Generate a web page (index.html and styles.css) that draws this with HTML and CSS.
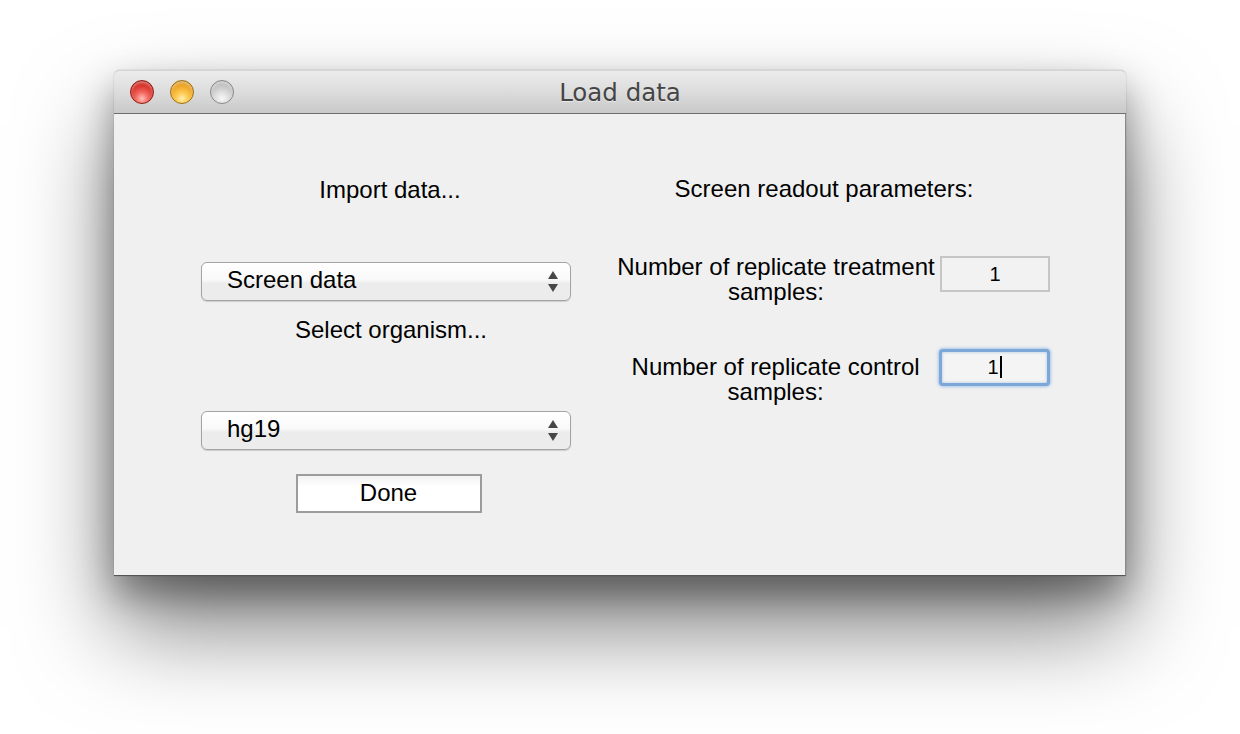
FILE: index.html
```html
<!DOCTYPE html>
<html>
<head>
<meta charset="utf-8">
<title>Load data</title>
<link rel="stylesheet" href="styles.css">
</head>
<body>
<div class="window">
  <div class="titlebar">
    <div class="lights">
      <span class="light red"></span>
      <span class="light yellow"></span>
      <span class="light grey"></span>
    </div>
    <div class="title">Load data</div>
  </div>
  <div class="content">
    <div class="col-left">
      <div class="label label-import">Import data...</div>
      <div class="popup popup-first">
        <span class="popup-text">Screen data</span>
        <span class="arrows"><span class="arr-up"></span><span class="arr-down"></span></span>
      </div>
      <div class="label label-organism">Select organism...</div>
      <div class="popup popup-second">
        <span class="popup-text">hg19</span>
        <span class="arrows"><span class="arr-up"></span><span class="arr-down"></span></span>
      </div>
      <div class="btn-done">Done</div>
    </div>
    <div class="col-right">
      <div class="label label-params">Screen readout parameters:</div>
      <div class="row row-treat">
        <div class="row-label">Number of replicate treatment<br>samples:</div>
        <div class="field field-treat">1</div>
      </div>
      <div class="row row-control">
        <div class="row-label">Number of replicate control<br>samples:</div>
        <div class="field field-focus">1<span class="caret"></span></div>
      </div>
    </div>
  </div>
</div>
</body>
</html>
```
FILE: styles.css
```css
html, body {
  margin: 0;
  padding: 0;
  background: #ffffff;
}
body {
  width: 1240px;
  height: 734px;
  overflow: hidden;
  padding: 70px 0 0 114px;
  box-sizing: border-box;
  font-family: "Liberation Sans", Arial, sans-serif;
  color: #000;
}
.window {
  width: 1012px;
  height: 506px;
  border-radius: 6px 6px 0 0;
  box-shadow: 0 52px 95px rgba(0,0,0,0.5), 0 18px 36px rgba(0,0,0,0.35), 0 0 1px rgba(0,0,0,0.5);
  display: flex;
  flex-direction: column;
  background: #f0f0f0;
}
.titlebar {
  height: 42px;
  flex: none;
  border-radius: 6px 6px 0 0;
  background: linear-gradient(to bottom, #ececec 0%, #dcdcdc 50%, #c9c9c9 100%);
  border-top: 1px solid #d4d4d4;
  border-bottom: 1px solid #6e6e6e;
  display: flex;
  align-items: center;
  position: relative;
}
.lights {
  display: flex;
  gap: 16px;
  padding-left: 16px;
}
.light {
  width: 22px;
  height: 22px;
  border-radius: 50%;
  box-sizing: content-box;
}
.red {
  background: radial-gradient(circle at 50% 80%, #ffc0b8 0%, #f26a62 30%, #d62e26 65%, #a8180f 100%);
  border: 1px solid #8f1810;
  box-shadow: inset 0 2px 3px rgba(255,255,255,0.45);
}
.yellow {
  background: radial-gradient(circle at 50% 80%, #fff0b0 0%, #fdc94f 30%, #eca223 65%, #bd7a14 100%);
  border: 1px solid #9a7012;
  box-shadow: inset 0 2px 3px rgba(255,255,255,0.45);
}
.grey {
  background: radial-gradient(circle at 50% 80%, #f8f8f8 0%, #dcdcdc 35%, #bdbdbd 70%, #a3a3a3 100%);
  border: 1px solid #888;
  box-shadow: inset 0 2px 3px rgba(255,255,255,0.5);
}
.title {
  position: absolute;
  left: 0;
  right: 0;
  top: 7px;
  text-align: center;
  font-family: "DejaVu Sans", "Liberation Sans", sans-serif;
  font-size: 24.5px;
  line-height: 30px;
  color: #454545;
  text-shadow: 0 1px 0 rgba(255,255,255,0.5);
}
.content {
  flex: 1;
  background: #f0f0f0;
  border-bottom: 1px solid #555;
  border-right: 1px solid #8a8a8a;
  display: flex;
}
.label {
  font-size: 24px;
  line-height: 28px;
  text-align: center;
  white-space: nowrap;
}
.col-left {
  width: 370px;
  margin-left: 87px;
  display: flex;
  flex-direction: column;
  align-items: stretch;
}
.label-import {
  margin-top: 62px;
  padding-left: 8px;
}
.popup {
  height: 37px;
  border: 1px solid #a3a3a3;
  border-radius: 6px;
  background: linear-gradient(to bottom, #ffffff 0%, #f9f9f9 45%, #ececec 55%, #ececec 100%);
  box-shadow: 0 1px 1px rgba(0,0,0,0.15);
  display: flex;
  align-items: center;
  justify-content: space-between;
  padding: 0 12px 0 25px;
}
.popup-first {
  margin-top: 58px;
}
.popup-text {
  font-size: 24px;
  line-height: 28px;
  margin-top: -4px;
}
.arrows {
  display: flex;
  flex-direction: column;
  gap: 5px;
  align-items: center;
}
.arr-up {
  width: 0;
  height: 0;
  border-left: 5px solid transparent;
  border-right: 5px solid transparent;
  border-bottom: 8px solid #474747;
}
.arr-down {
  width: 0;
  height: 0;
  border-left: 5px solid transparent;
  border-right: 5px solid transparent;
  border-top: 8px solid #474747;
}
.label-organism {
  margin-top: 15px;
  padding-left: 10px;
}
.popup-second {
  margin-top: 67px;
}
.btn-done {
  align-self: center;
  margin-top: 24px;
  margin-left: 5px;
  width: 182px;
  height: 35px;
  border: 2px solid #9c9c9c;
  background: linear-gradient(to bottom, #f2f2f2 0%, #ffffff 30%, #ffffff 100%);
  font-size: 24px;
  line-height: 33px;
  text-align: center;
}
.col-right {
  margin-left: 41px;
  width: 438px;
  display: flex;
  flex-direction: column;
}
.label-params {
  margin-top: 61px;
  padding-right: 14px;
}
.row {
  display: flex;
  align-items: flex-start;
}
.row-treat {
  margin-top: 51px;
}
.row-control {
  margin-top: 50px;
}
.row-label {
  width: 328px;
  font-size: 24px;
  line-height: 25px;
  text-align: center;
  white-space: nowrap;
}
.field {
  width: 106px;
  height: 32px;
  border: 2px solid #c6c6c6;
  background: #f2f2f2;
  font-size: 20px;
  line-height: 32px;
  text-align: center;
  box-sizing: content-box;
}
.field-treat {
  margin-top: 2px;
}
.field-focus {
  margin-top: -5px;
  height: 31px;
  width: 105px;
  border: 3px solid #7ca7d9;
  border-radius: 4px;
  box-shadow: 0 0 3px 1px rgba(110,160,220,0.55), inset 0 0 3px rgba(90,140,210,0.5);
  background: #f4f4f4;
  line-height: 31px;
}
.caret {
  display: inline-block;
  width: 2px;
  height: 22px;
  background: #000;
  vertical-align: -4px;
  margin-left: 1px;
}
```
